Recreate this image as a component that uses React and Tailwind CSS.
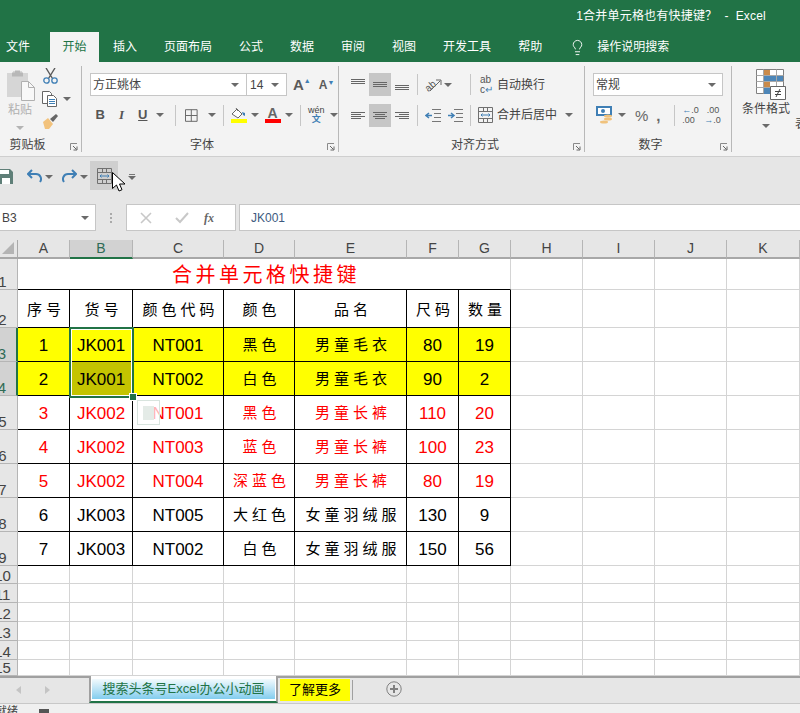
import { Lightbulb } from "lucide-react";

const columns = ["A", "B", "C", "D", "E", "F", "G", "H", "I", "J", "K"];
const header = ["序号", "货号", "颜色代码", "颜色", "品名", "尺码", "数量"];
const rows = [
  { n: 3, yellow: true, cells: ["1", "JK001", "NT001", "黑色", "男童毛衣", "80", "19"] },
  { n: 4, yellow: true, cells: ["2", "JK001", "NT002", "白色", "男童毛衣", "90", "2"] },
  { n: 5, red: true, cells: ["3", "JK002", "NT001", "黑色", "男童长裤", "110", "20"] },
  { n: 6, red: true, cells: ["4", "JK002", "NT003", "蓝色", "男童长裤", "100", "23"] },
  { n: 7, red: true, cells: ["5", "JK002", "NT004", "深蓝色", "男童长裤", "80", "19"] },
  { n: 8, cells: ["6", "JK003", "NT005", "大红色", "女童羽绒服", "130", "9"] },
  { n: 9, cells: ["7", "JK003", "NT002", "白色", "女童羽绒服", "150", "56"] },
];
const menu = [
  ["插入", "ml-[14px]"],
  ["页面布局", "ml-[27px]"],
  ["公式", "ml-[27px]"],
  ["数据", "ml-[27px]"],
  ["审阅", "ml-[27px]"],
  ["视图", "ml-[27px]"],
  ["开发工具", "ml-[27px]"],
  ["帮助", "ml-[27px]"],
];

function Caret({ className = "" }) {
  return <span className={`inline-block w-0 h-0 shrink-0 border-x-[4px] border-x-transparent border-t-[4px] border-t-[#6a6a6a] ${className}`} />;
}

function Launcher() {
  return (
    <svg width="8" height="8" viewBox="0 0 8 8" className="shrink-0 mt-[3px]">
      <path d="M.5 7V.5H7" fill="none" stroke="#8a8a8a" />
      <path d="M3 3l3.5 3.5M7 3.5V7H3.5" fill="none" stroke="#666" />
    </svg>
  );
}

function Sep() {
  return <div className="w-px h-[21px] bg-[#c6c6c6] shrink-0" />;
}

function Group({ label, width, labelClass = "", children }) {
  return (
    <div className={`${width} shrink-0 h-[86px] mt-[4px] border-r border-[#b8b8b8] flex flex-col`}>
      <div className="h-[72px]">{children}</div>
      <div className="h-[14px] flex items-center pr-[3px]">
        <span className={`flex-1 text-center text-[12px] leading-none text-[#444] ${labelClass}`}>{label}</span>
        <Launcher />
      </div>
    </div>
  );
}

// text lines, for the align buttons
function Lines({ lines, active }) {
  return (
    <div className={`w-[22px] h-[23px] flex items-center justify-center ${active ? "bg-[#c6c6c6]" : ""}`}>
      <svg width="16" height="13" viewBox="0 0 16 13">
        {lines.map(([x1, x2, y]) => (
          <path key={y} d={`M${x1} ${y}.5H${x2}`} stroke="#666" />
        ))}
      </svg>
    </div>
  );
}

function MergeIcon() {
  return (
    <svg width="15" height="16" viewBox="0 0 15 16" className="shrink-0">
      <path d="M.5.5h14v15H.5zM.5 4.5h14M.5 11.5h14M5.5.5v4M9.5.5v4M5.5 11.5v4M9.5 11.5v4" fill="none" stroke="#707070" />
      <path d="M3 8h9" stroke="#3f7fb5" />
      <path d="M4.5 6.5L3 8l1.5 1.5M10.5 6.5L12 8l-1.5 1.5" fill="none" stroke="#3f7fb5" />
    </svg>
  );
}

function Clipboard() {
  return (
    <Group label="剪贴板" width="w-[82px]" labelClass="pr-[15px]">
      <div className="flex pt-[4px]">
        <div className="w-[42px] flex flex-col items-center pr-[2px]">
          <svg width="29" height="31" viewBox="0 0 29 31">
            <path d="M1 3h6V1h9v2h6v24H1z" fill="#d6d6d6" />
            <path d="M9 .5h5v2h3v4H6v-4h3z" fill="#b8b8b8" />
            <path d="M15.5 11.5h7l6 6v13h-13z" fill="#f8f8f8" stroke="#b0b0b0" />
            <path d="M22.5 11.5v6h6" fill="none" stroke="#b0b0b0" />
          </svg>
          <span className="text-[12px] leading-none mt-[3px] text-[#b0b0b0]">粘贴</span>
          <Caret className="mt-[10px] border-t-[#b4b4b4]" />
        </div>
        <div className="flex flex-col -mt-[2px]">
          <svg width="15" height="16" viewBox="0 0 15 16" className="ml-[1px]">
            <path d="M3 0l6.5 10.5M12 0L5.5 10.5" stroke="#5a5a5a" strokeWidth="1.4" />
            <circle cx="3.5" cy="12.5" r="2.7" fill="none" stroke="#3f7fb5" strokeWidth="1.3" />
            <circle cx="11.5" cy="12.5" r="2.7" fill="none" stroke="#3f7fb5" strokeWidth="1.3" />
          </svg>
          <div className="flex items-center mt-[7px]">
            <svg width="16" height="16" viewBox="0 0 16 16">
              <path d="M.5.5h7l2 2v10h-9z" fill="#fff" stroke="#666" />
              <path d="M5.5 4.5h6l3 3v8h-9z" fill="#fff" stroke="#666" />
              <path d="M7 8.5h6M7 10.5h6M7 12.5h6" stroke="#3f7fb5" />
            </svg>
            <Caret className="ml-[5px]" />
          </div>
          <svg width="16" height="15" viewBox="0 0 16 15" className="mt-[7px]">
            <path d="M1 8l5-4 5 6-4 5H3z" fill="#f2c27c" />
            <path d="M8 5l6-5 2 2-5 6z" fill="#666" />
          </svg>
        </div>
      </div>
    </Group>
  );
}

function FontGroup() {
  return (
    <Group label="字体" width="w-[257px]" labelClass="pl-[7px] pr-[12px]">
      <div className="pl-[8px] pt-[7px]">
        <div className="flex items-center h-[23px]">
          <div className="w-[157px] h-[23px] bg-white border border-[#c6c6c6] flex items-center pl-[2px] pr-[7px] text-[12px] text-[#444]">
            <span className="flex-1">方正姚体</span>
            <Caret />
          </div>
          <div className="w-[40px] h-[23px] bg-white border border-l-0 border-[#c6c6c6] flex items-center pl-[3px] pr-[7px] text-[12px] text-[#444]">
            <span className="flex-1">14</span>
            <Caret />
          </div>
          <span className="ml-[6px] text-[15px] leading-none font-bold text-[#5a5a5a]">
            A<span className="text-[#3f7fb5] text-[7px] align-top">▲</span>
          </span>
          <span className="ml-[8px] text-[12px] leading-none font-bold text-[#5a5a5a]">
            A<span className="text-[#3f7fb5] text-[7px] align-top">▼</span>
          </span>
        </div>
        <div className="flex items-center h-[24px] mt-[7px] text-[#555]">
          <span className="w-[21px] text-center text-[13px] font-bold">B</span>
          <span className="w-[23px] text-center text-[13px] italic font-bold font-['Liberation_Serif',serif]">I</span>
          <span className="w-[21px] text-center text-[13px] font-bold underline">U</span>
          <Caret className="ml-[3px]" />
          <div className="ml-[11px]"><Sep /></div>
          <svg width="13" height="13" viewBox="0 0 13 13" className="ml-[9px]">
            <path d="M.5.5h12v12H.5zM6.5.5v12M.5 6.5h12" fill="none" stroke="#666" />
          </svg>
          <Caret className="ml-[10px]" />
          <div className="ml-[7px]"><Sep /></div>
          <div className="ml-[7px] w-[16px] flex flex-col items-center">
            <svg width="15" height="12" viewBox="0 0 15 12">
              <path d="M1 7l5-5 5 5-4 4z" fill="#fff" stroke="#666" />
              <path d="M5 1l2 3" stroke="#666" />
              <path d="M11 5l3 1v3l-2-1z" fill="#3f7fb5" />
            </svg>
            <div className="w-[16px] h-[4px] bg-[#ffff00]" />
          </div>
          <Caret className="ml-[4px]" />
          <div className="ml-[6px] w-[16px] flex flex-col items-center">
            <span className="text-[14px] leading-[12px] font-bold text-[#666]">A</span>
            <div className="w-[16px] h-[4px] bg-[#ff0000]" />
          </div>
          <Caret className="ml-[4px]" />
          <div className="ml-[7px]"><Sep /></div>
          <div className="ml-[7px] w-[18px] flex flex-col items-center leading-none">
            <span className="text-[9px] text-[#444]">wén</span>
            <span className="text-[9px] text-[#3f7fb5] font-bold">文</span>
          </div>
          <Caret className="ml-[5px]" />
        </div>
      </div>
    </Group>
  );
}

function Alignment() {
  return (
    <Group label="对齐方式" width="w-[246px]" labelClass="pl-[42px] pr-[4px]">
      <div className="pl-[8px] pt-[7px]">
        <div className="flex items-center h-[23px]">
          <Lines lines={[[1, 15, 1], [1, 15, 3], [1, 15, 5]]} />
          <Lines active lines={[[1, 15, 4], [1, 15, 6], [1, 15, 8]]} />
          <Lines lines={[[1, 15, 7], [1, 15, 9], [1, 15, 11]]} />
          <div className="ml-[4px]"><Sep /></div>
          <svg width="17" height="16" viewBox="0 0 17 16" className="ml-[7px]">
            <text x="0" y="12" fontSize="10" fill="#555" transform="rotate(-40 6 9)">ab</text>
            <path d="M5 14L15 4M11 3h5v5" fill="none" stroke="#666" />
          </svg>
          <Caret className="ml-[2px]" />
          <div className="ml-[18px]"><Sep /></div>
          <div className="ml-[9px] w-[13px] flex flex-col text-[10px] leading-[10px] text-[#555]">
            <span>ab</span>
            <span>c<span className="text-[#3f7fb5]">↵</span></span>
          </div>
          <span className="ml-[4px] text-[12px] text-[#444] whitespace-nowrap">自动换行</span>
        </div>
        <div className="flex items-center h-[24px] mt-[7px]">
          <Lines lines={[[1, 15, 3], [1, 11, 5], [1, 15, 7], [1, 11, 9]]} />
          <Lines active lines={[[1, 15, 3], [3, 13, 5], [1, 15, 7], [3, 13, 9]]} />
          <Lines lines={[[1, 15, 3], [5, 15, 5], [1, 15, 7], [5, 15, 9]]} />
          <div className="ml-[4px]"><Sep /></div>
          <svg width="16" height="13" viewBox="0 0 16 13" className="ml-[7px]">
            <path d="M7 .5h9M9 4.5h7M9 8.5h7M7 12.5h9" stroke="#777" />
            <path d="M7 6.5H2M4 4L1 6.5 4 9" fill="none" stroke="#3f7fb5" strokeWidth="1.5" />
          </svg>
          <svg width="16" height="13" viewBox="0 0 16 13" className="ml-[6px]">
            <path d="M7 .5h9M9 4.5h7M9 8.5h7M7 12.5h9" stroke="#777" />
            <path d="M1 6.5h5M4 4l3 2.5L4 9" fill="none" stroke="#3f7fb5" strokeWidth="1.5" />
          </svg>
          <div className="ml-[7px]"><Sep /></div>
          <div className="ml-[7px]"><MergeIcon /></div>
          <span className="ml-[4px] w-[60px] text-[12px] text-[#444] whitespace-nowrap">合并后居中</span>
          <Caret className="ml-[8px]" />
        </div>
      </div>
    </Group>
  );
}

function NumberGroup() {
  return (
    <Group label="数字" width="w-[147px]" labelClass="pr-[4px]">
      <div className="pl-[8px] pt-[7px]">
        <div className="w-[130px] h-[23px] bg-white border border-[#c6c6c6] flex items-center pl-[2px] pr-[6px] text-[12px] text-[#444]">
          <span className="flex-1">常规</span>
          <Caret />
        </div>
        <div className="flex items-center h-[24px] mt-[7px]">
          <svg width="17" height="18" viewBox="0 0 17 18" className="ml-[3px]">
            <path d="M1 1h14v8H1z" fill="#fff" stroke="#3f7fb5" strokeWidth="2" />
            <circle cx="7" cy="5" r="2" fill="#3f7fb5" />
            <ellipse cx="12" cy="10" rx="4" ry="1.5" fill="#f0c27c" />
            <ellipse cx="12" cy="13" rx="4" ry="1.5" fill="#f0c27c" />
            <ellipse cx="8" cy="16" rx="4" ry="1.5" fill="#f0c27c" />
          </svg>
          <Caret className="ml-[5px]" />
          <span className="ml-[9px] text-[15px] leading-none text-[#666]">%</span>
          <span className="ml-[8px] w-[5px] text-[15px] font-bold leading-none text-[#666]">,</span>
          <div className="ml-[13px]"><Sep /></div>
          <div className="ml-[7px] w-[15px] flex flex-col text-[9px] leading-[10px] text-[#555]">
            <span className="text-right whitespace-nowrap"><span className="text-[#3f7fb5]">←</span>.0</span>
            <span>.00</span>
          </div>
          <div className="ml-[7px] w-[15px] flex flex-col text-[9px] leading-[10px] text-[#555]">
            <span className="text-right">.00</span>
            <span className="text-right whitespace-nowrap"><span className="text-[#3f7fb5]">→</span>.0</span>
          </div>
        </div>
      </div>
    </Group>
  );
}

function Styles() {
  return (
    <div className="flex-1 flex overflow-hidden mt-[4px]">
      <div className="w-[58px] ml-[5px] shrink-0 flex flex-col items-center pt-[3px]">
        <svg width="30" height="31" viewBox="0 0 30 31" className="ml-[10px]">
          <path d="M.5.5h27v24H.5z" fill="#fff" stroke="#808080" />
          <path d="M8 1h6v6H8zM8 13h6v6H8z" fill="#c98a4a" />
          <path d="M8 7h19v6H8zM8 19h6v6H8z" fill="#4d86b8" />
          <path d="M.5 6.5h27M.5 12.5h27M.5 18.5h27M7.5.5v24M20.5.5v24" fill="none" stroke="#a8a8a8" />
          <path d="M14.5 17.5h15v13h-15z" fill="#fff" stroke="#666" />
          <path d="M19 22.5h6M19 25.5h6M24 20l-4 8" fill="none" stroke="#444" />
        </svg>
        <span className="text-[12px] leading-none mt-[3px] text-[#444] whitespace-nowrap">条件格式</span>
        <Caret className="mt-[9px]" />
      </div>
      <span className="pt-[52px] text-[12px] leading-none text-[#444]">表</span>
    </div>
  );
}

function QuickAccess() {
  return (
    <div className="h-[47px] bg-[#e6e6e6] border-t border-[#cfcfcf] flex items-center relative overflow-hidden">
      <svg width="13" height="15" viewBox="0 0 13 15" className="shrink-0 -mt-[8px]">
        <path d="M0 0h10l3 3v12H0z" fill="#5f7f78" />
        <path d="M0 1h9v4H0zM2 9h8v6H2z" fill="#fff" />
      </svg>
      <svg width="15" height="14" viewBox="0 0 15 14" className="ml-[14px] -mt-[8px]">
        <path d="M5 1L1 5l4 4" fill="none" stroke="#3f7fb5" strokeWidth="2" />
        <path d="M2 5h7a5 5 0 0 1 4 8" fill="none" stroke="#3f7fb5" strokeWidth="2" />
      </svg>
      <Caret className="ml-[3px] -mt-[6px]" />
      <svg width="15" height="14" viewBox="0 0 15 14" className="ml-[9px] -mt-[8px]">
        <path d="M10 1l4 4-4 4" fill="none" stroke="#3f7fb5" strokeWidth="2" />
        <path d="M13 5H6a5 5 0 0 0-4 8" fill="none" stroke="#3f7fb5" strokeWidth="2" />
      </svg>
      <Caret className="ml-[3px] -mt-[6px]" />
      <div className="ml-[2px] w-[28px] h-[29px] -mt-[9px] bg-[#cfcfcf] flex items-center justify-center">
        <MergeIcon />
      </div>
      <div className="ml-[10px] -mt-[6px] flex flex-col items-center gap-[1px]">
        <div className="w-[6px] h-px bg-[#777]" />
        <Caret className="border-x-[3px]" />
      </div>
      {/* mouse pointer */}
      <svg width="14" height="21" viewBox="0 0 14 21" className="absolute left-[112px] top-[15px]">
        <path d="M.5.5v16l4-3.5 2.5 6 3-1.3-2.5-5.7h5.5z" fill="#fff" stroke="#000" />
      </svg>
    </div>
  );
}

function FormulaBar() {
  return (
    <div className="h-[37px] bg-[#e6e6e6] flex items-start pt-px">
      <div className="w-[96px] h-[27px] bg-white border border-[#c6c6c6] border-l-0 flex items-center pl-[2px] pr-[6px] text-[12px] text-[#444]">
        <span className="flex-1">B3</span>
        <Caret />
      </div>
      <div className="w-[30px] h-[27px] flex flex-col items-center justify-center gap-[2px]">
        <div className="w-[2px] h-[2px] bg-[#aaa]" />
        <div className="w-[2px] h-[2px] bg-[#aaa]" />
        <div className="w-[2px] h-[2px] bg-[#aaa]" />
      </div>
      <div className="w-[110px] h-[27px] bg-white border border-[#c6c6c6] flex items-center">
        <svg width="12" height="12" viewBox="0 0 12 12" className="ml-[13px]">
          <path d="M1 1l10 10M11 1L1 11" stroke="#c8c8c8" strokeWidth="1.6" />
        </svg>
        <svg width="14" height="12" viewBox="0 0 14 12" className="ml-[23px]">
          <path d="M1 6l4 4 8-9" fill="none" stroke="#c8c8c8" strokeWidth="2" />
        </svg>
        <span className="ml-[15px] text-[12px] italic font-bold font-['Liberation_Serif',serif] text-[#666]">fx</span>
      </div>
      <div className="flex-1 h-[27px] ml-[3px] bg-white border-y border-[#c6c6c6] border-l flex items-center pl-[11px] text-[12px] text-[#3d5a80]">
        JK001
      </div>
    </div>
  );
}

function RowHead({ n, active }) {
  return (
    <div className={`border-b border-[#b5b5b5] flex items-end justify-center pr-[12px] overflow-hidden text-[15px] leading-[15px] ${active ? "bg-[#d2d2d2] border-r-2 border-r-[#217346] text-[#2f6b55]" : "bg-[#e6e6e6] border-r border-r-[#b5b5b5] text-[#444]"}`}>
      {n}
    </div>
  );
}

function Gridlines() {
  return [0, 1, 2, 3].map((i) => (
    <div key={i} className="border-r border-b border-[#d4d4d4] bg-white" />
  ));
}

function Sheet() {
  return (
    <div className="relative h-[436px] overflow-hidden grid grid-cols-[18px_52px_63px_91px_71px_112px_52px_52px_72px_72px_72px_73px] grid-rows-[19px_31px_38px_34px_34px_34px_34px_34px_34px_34px_18px_19px_19px_19px_19px_16px] text-black">
      <div className="bg-[#e6e6e6] border-r border-b-2 border-[#a8a8a8] flex items-end justify-end p-[3px]">
        <div className="w-0 h-0 border-l-[12px] border-l-transparent border-b-[12px] border-b-[#b4b4b4]" />
      </div>
      {columns.map((c) => (
        <div key={c} className={`border-r border-r-[#b5b5b5] border-b-2 flex items-center justify-center text-[14px] ${c === "B" ? "bg-[#d2d2d2] border-b-[#217346] text-[#2f6b55]" : "bg-[#e6e6e6] border-b-[#a8a8a8] text-[#444]"}`}>
          {c}
        </div>
      ))}

      <RowHead n={1} />
      <div className="col-span-7 bg-white border-b border-b-black border-r border-r-[#d4d4d4] flex items-center justify-center pl-[4px] pt-px text-[20px] leading-none tracking-[3.5px] text-[#ff0000]">
        合并单元格快捷键
      </div>
      <Gridlines />

      <RowHead n={2} />
      {header.map((h) => (
        <div key={h} className="bg-white border-r border-b border-black flex items-center justify-center pl-[5px] pt-[3px] text-[15px] tracking-[4px] whitespace-nowrap">
          {h}
        </div>
      ))}
      <Gridlines />

      {rows.map((row) => (
        <div key={row.n} className="contents">
          <RowHead n={row.n} active={row.yellow} />
          {row.cells.map((text, i) => {
            const cjk = i === 3 || i === 4;
            const selected = row.n === 4 && i === 1;
            return (
              <div
                key={i}
                className={`border-r border-b border-black flex items-center justify-center pt-[2px] whitespace-nowrap ${cjk ? "pl-[5px] text-[15px] tracking-[4px]" : "text-[17px]"} ${selected ? "bg-[#c4c400]" : row.yellow ? "bg-[#ffff00]" : "bg-white"} ${row.red ? "text-[#ff0000]" : "text-black"}`}
              >
                {text}
              </div>
            );
          })}
          <Gridlines />
        </div>
      ))}

      {[10, 11, 12, 13, 14, 15].map((n) => (
        <div key={n} className="contents">
          <RowHead n={n} />
          {columns.map((c) => (
            <div key={c} className="border-r border-b border-[#d4d4d4] bg-white" />
          ))}
        </div>
      ))}

      {/* selection box around B3:B4 */}
      <div className="absolute left-[69px] top-[87px] w-[65px] h-[71px] border-2 border-[#217346] outline outline-1 -outline-offset-3 outline-white" />
      <div className="absolute left-[129px] top-[153px] w-[6px] h-[6px] bg-[#217346] border border-white box-content" />
      {/* paste options tag */}
      <div className="absolute left-[137px] top-[160px] w-[23px] h-[25px] border border-[#d8e4de] bg-white/70 flex items-center justify-center">
        <div className="w-[11px] h-[14px] bg-[#e4ebe7]" />
      </div>
    </div>
  );
}

function SheetTabs() {
  return (
    <div className="h-[28px] bg-[#e6e6e6] border-t-2 border-[#a0a0a0] flex border-b border-b-[#c8c8c8]">
      <div className="w-[89px] flex items-center pb-[2px]">
        <div className="ml-[16px] w-0 h-0 border-y-[4px] border-y-transparent border-r-[5px] border-r-[#c4c4c4]" />
        <div className="ml-[24px] w-0 h-0 border-y-[4px] border-y-transparent border-l-[5px] border-l-[#c4c4c4]" />
      </div>
      <div className="w-[189px] -mt-[2px] h-[27px] bg-white border-x-2 border-[#a0a0a0] border-b-2 border-b-[#217346] px-[1px] pt-[3px] pb-[2px]">
        <div className="h-full bg-gradient-to-b from-[#f2fafd] to-[#82cdee] flex items-center justify-center text-[13px] text-[#217346] whitespace-nowrap">
          搜索头条号Excel办公小动画
        </div>
      </div>
      <div className="w-[70px] h-[22px] mt-[1px] ml-[2px] bg-[#ffff00] flex items-center justify-center text-[13px] text-black">
        了解更多
      </div>
      <div className="w-px h-[20px] mt-[2px] ml-[2px] bg-[#a0a0a0]" />
      <svg width="16" height="16" viewBox="0 0 16 16" className="ml-[33px] mt-[3px]">
        <circle cx="8" cy="8" r="7.2" fill="none" stroke="#808080" />
        <path d="M8 4v8M4 8h8" stroke="#808080" strokeWidth="2" />
      </svg>
    </div>
  );
}

export default function App() {
  return (
    <div className="w-[800px] h-[713px] overflow-hidden bg-white font-['Liberation_Sans','Noto_Sans_CJK_SC',sans-serif]">
      <div className="h-[32px] bg-[#217346] flex items-center justify-end pr-[34px] text-[12px] tracking-[0.2px] text-white whitespace-pre">
        1合并单元格也有快捷键？  -  Excel
      </div>
      <div className="h-[30px] bg-[#217346] flex items-center text-[12px] text-white">
        <span className="ml-[6px]">文件</span>
        <span className="ml-[20px] w-[49px] h-full bg-[#f3f3f3] text-[#217346] flex items-center justify-center">开始</span>
        {menu.map(([label, gap]) => (
          <span key={label} className={gap}>{label}</span>
        ))}
        <Lightbulb size={17} strokeWidth={1.3} className="ml-[27px]" />
        <span className="ml-[11px]">操作说明搜索</span>
      </div>
      <div className="h-[94px] bg-[#f3f3f3] flex">
        <Clipboard />
        <FontGroup />
        <Alignment />
        <NumberGroup />
        <Styles />
      </div>
      <QuickAccess />
      <FormulaBar />
      <Sheet />
      <SheetTabs />
      <div className="h-[9px] bg-[#f0f0f0] overflow-hidden flex text-[11px] leading-[14px] text-[#444]">
        <span className="-ml-[4px]">就绪</span>
        <div className="ml-[21px] mt-[5px] w-[10px] h-[4px] bg-[#555]" />
      </div>
    </div>
  );
}
